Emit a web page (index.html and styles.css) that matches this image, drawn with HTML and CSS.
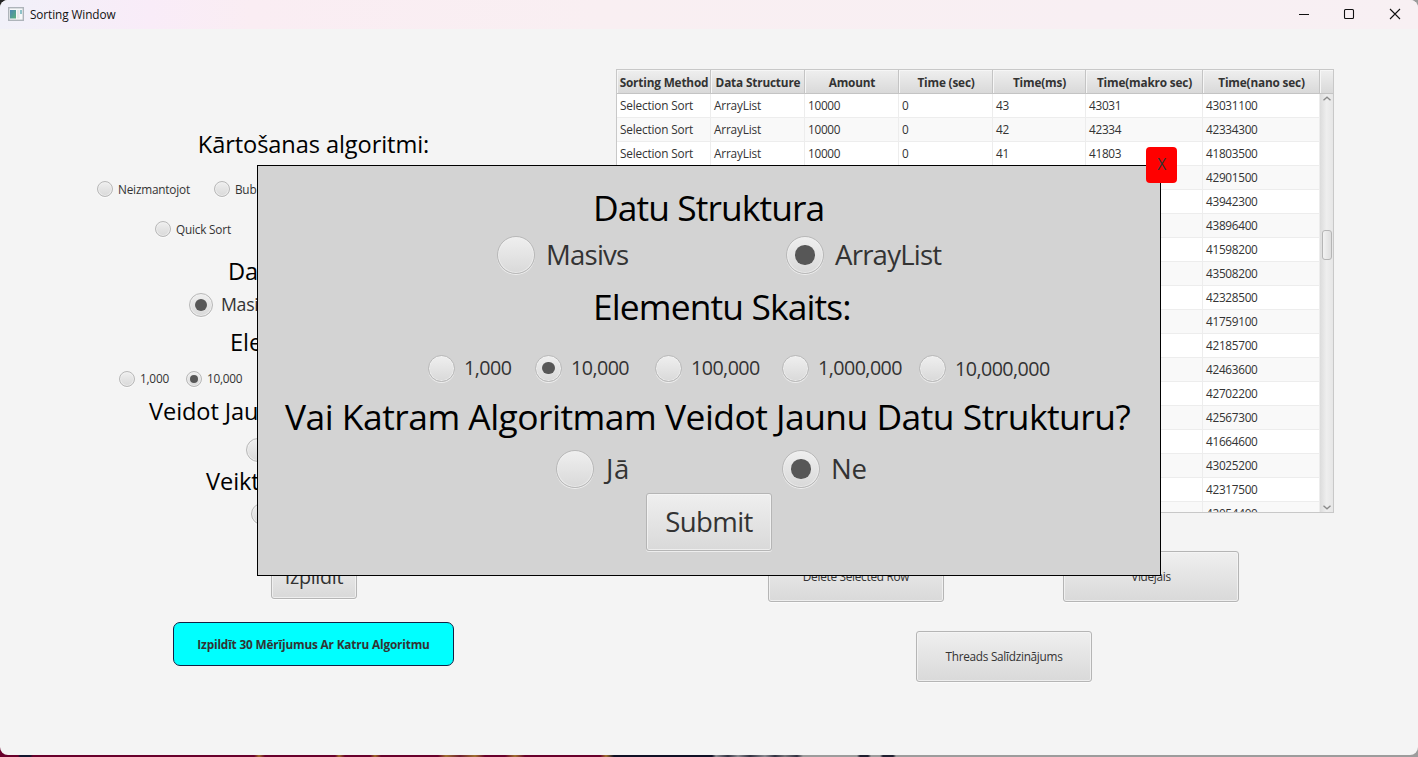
FILE: index.html
```html
<!DOCTYPE html>
<html lang="lv">
<head>
<meta charset="utf-8">
<title>Sorting Window</title>
<link rel="stylesheet" href="styles.css">
</head>
<body>
<div class="window">
  <header class="titlebar">
    <svg class="app-icon" width="16" height="14" viewBox="0 0 16 14"><defs><linearGradient id="g" x1="0" y1="0" x2="1" y2="1"><stop offset="0" stop-color="#4b86b4"/><stop offset="1" stop-color="#58b07a"/></linearGradient></defs><rect x=".7" y=".7" width="14.6" height="12.6" fill="#f6f8f9" stroke="#aeb4ba" stroke-width="1.4"/><rect x="2" y="3" width="6" height="8.5" fill="url(#g)"/><rect x="9" y="3" width="2.5" height="8.5" fill="#e4e6e8"/><rect x="12" y="3" width="2" height="4" fill="#8fc3c9"/></svg>
    <span class="title">Sorting Window</span>
    <svg class="controls" width="104" height="12" viewBox="0 0 104 12" fill="none" stroke="#111" stroke-width="1.1"><path d="M0 6.5h10"/><rect x="45.5" y="1.5" width="9" height="9" rx="1"/><path d="M91 1l10 10M101 1L91 11"/></svg>
  </header>
  <main class="content">
    <section class="options">
      <h2 class="heading r-alg">Kārtošanas algoritmi:</h2>
      <div class="row words r-one"><span class="radio"><i class="dot"></i>Neizmantojot</span><span class="radio"><i class="dot"></i>Bubble Sort</span></div>
      <div class="row words r-two"><span class="radio"><i class="dot"></i>Quick Sort</span></div>
      <h2 class="heading r-struct">Datu</h2>
      <div class="row mid r-array"><span class="radio"><i class="dot on"></i><span class="lift">Masivs</span></span></div>
      <h2 class="heading r-count">Elementu</h2>
      <div class="row r-amount"><span class="radio"><i class="dot"></i><span class="lift">1,000</span></span><span class="radio"><i class="dot on"></i><span class="lift">10,000</span></span></div>
      <h2 class="heading r-new">Veidot Jaunu</h2>
      <div class="row mid r-yes"><span class="radio"><i class="dot"></i></span></div>
      <h2 class="heading r-run">Veikt</h2>
      <div class="row mid r-last"><span class="radio"><i class="dot"></i></span></div>
      <button class="btn run">Izpildīt</button>
      <button class="run-all">Izpildīt 30 Mērījumus Ar Katru Algoritmu</button>
    </section>
    <section class="results">
      <div class="table-box">
        <table class="table">
          <colgroup><col class="w94"><col class="w94"><col class="w94"><col class="w94"><col class="w93"><col class="w117"><col class="w117"></colgroup>
          <thead><tr><th>Sorting Method</th><th>Data Structure</th><th>Amount</th><th>Time (sec)</th><th>Time(ms)</th><th>Time(makro sec)</th><th>Time(nano sec)</th></tr></thead>
          <tbody>
          <tr><td class="name">Selection Sort</td><td class="name">ArrayList</td><td>10000</td><td>0</td><td>43</td><td>43031</td><td>43031100</td></tr>
          <tr><td class="name">Selection Sort</td><td class="name">ArrayList</td><td>10000</td><td>0</td><td>42</td><td>42334</td><td>42334300</td></tr>
          <tr><td class="name">Selection Sort</td><td class="name">ArrayList</td><td>10000</td><td>0</td><td>41</td><td>41803</td><td>41803500</td></tr>
          <tr><td></td><td></td><td></td><td></td><td></td><td></td><td>42901500</td></tr>
          <tr><td></td><td></td><td></td><td></td><td></td><td></td><td>43942300</td></tr>
          <tr><td></td><td></td><td></td><td></td><td></td><td></td><td>43896400</td></tr>
          <tr><td></td><td></td><td></td><td></td><td></td><td></td><td>41598200</td></tr>
          <tr><td></td><td></td><td></td><td></td><td></td><td></td><td>43508200</td></tr>
          <tr><td></td><td></td><td></td><td></td><td></td><td></td><td>42328500</td></tr>
          <tr><td></td><td></td><td></td><td></td><td></td><td></td><td>41759100</td></tr>
          <tr><td></td><td></td><td></td><td></td><td></td><td></td><td>42185700</td></tr>
          <tr><td></td><td></td><td></td><td></td><td></td><td></td><td>42463600</td></tr>
          <tr><td></td><td></td><td></td><td></td><td></td><td></td><td>42702200</td></tr>
          <tr><td></td><td></td><td></td><td></td><td></td><td></td><td>42567300</td></tr>
          <tr><td></td><td></td><td></td><td></td><td></td><td></td><td>41664600</td></tr>
          <tr><td></td><td></td><td></td><td></td><td></td><td></td><td>43025200</td></tr>
          <tr><td></td><td></td><td></td><td></td><td></td><td></td><td>42317500</td></tr>
          <tr><td></td><td></td><td></td><td></td><td></td><td></td><td>42054400</td></tr>
          </tbody>
        </table>
        <div class="side">
          <div class="side-head"></div>
          <div class="scrollbar">
            <svg width="8" height="5" viewBox="0 0 8 5" fill="none" stroke="#8a8a8a" stroke-width="1.3"><path d="M.5 4.3L4 1.2l3.5 3.1"/></svg>
            <div class="thumb"></div>
            <svg width="8" height="5" viewBox="0 0 8 5" fill="none" stroke="#8a8a8a" stroke-width="1.3"><path d="M.5 .7L4 3.8 7.5 .7"/></svg>
          </div>
        </div>
      </div>
      <div class="actions"><button class="btn act">Delete Selected Row</button><button class="btn act">Vidējais</button></div>
      <button class="btn act threads">Threads Salīdzinājums</button>
    </section>
  </main>
</div>
<div class="dialog">
  <h1 class="big d-struct">Datu Struktura</h1>
  <div class="row large d-type"><span class="radio"><i class="dot"></i><span class="lift">Masivs</span></span><span class="radio"><i class="dot on"></i><span class="lift">ArrayList</span></span></div>
  <h1 class="big d-count">Elementu Skaits:</h1>
  <div class="row medium d-amount"><span class="radio"><i class="dot"></i><span class="lift">1,000</span></span><span class="radio"><i class="dot on"></i><span class="lift">10,000</span></span><span class="radio"><i class="dot"></i><span class="lift">100,000</span></span><span class="radio"><i class="dot"></i><span class="lift">1,000,000</span></span><span class="radio"><i class="dot"></i><span>10,000,000</span></span></div>
  <h1 class="big d-new">Vai Katram Algoritmam Veidot Jaunu Datu Strukturu?</h1>
  <div class="row large d-yes"><span class="radio"><i class="dot"></i><span class="lift yes">Jā</span></span><span class="radio"><i class="dot on"></i><span class="lift">Ne</span></span></div>
  <button class="btn submit">Submit</button>
  <button class="close">X</button>
</div>
</body>
</html>
```
FILE: styles.css
```css
* { box-sizing: border-box; }
body {
  margin: 0; width: 1418px; height: 757px; overflow: hidden; position: relative;
  font: 11.8px "Open Sans", "Noto Sans", sans-serif; letter-spacing: -0.3px; color: #333;
  background:
    linear-gradient(#252525, #252525) 0 0 / 20px 20px no-repeat,
    linear-gradient(90deg, #69002b 0 18px, #14142e 20px 30px, #69002b 33px 254px, #a06a28 259px, #69002b 265px 335px, #a06a28 339px, #69002b 345px 370px, #a06a28 375px, #69002b 381px 438px, #a07030 446px, #6d1b30 460px, #a07030 475px, #69002b 485px 505px, #a07030 515px, #69002b 525px 600px, #a07030 606px, #101025 614px 712px, #8a8a90 716px, #303040 728px, #8a8a90 738px, #303040 750px, #8a8a90 765px, #303040 775px, #77777b 785px, #303040 797px, #9c9c9c 803px 857px, #202030 860px 868px, #9c9c9c 871px 880px, #202030 883px 893px, #9c9c9c 896px) 0 100% / 100% 20px no-repeat,
    #9c9c9c;
}
h1, h2 { margin: 0; font-weight: 400; color: #000; white-space: nowrap; }
button { font: inherit; letter-spacing: inherit; color: #333; padding: 0; white-space: nowrap; }

.window { height: 755px; border-radius: 8px; overflow: hidden; background: #f4f4f4; display: flex; flex-direction: column; }
.titlebar { height: 29px; flex: none; display: flex; align-items: center; padding: 0 15px 1px 8px; background: linear-gradient(90deg, #f1f1f9, #f9ecf8 150px, #faedf3 250px, #f9eff2 600px, #f8eff3 1100px, #f8f0f3); }
.title { margin-left: 6px; color: #111; letter-spacing: -0.1px; }
.controls { margin-left: auto; }
.content { display: flex; flex: 1; }

.options { width: 616px; flex: none; padding-left: 11px; display: flex; flex-direction: column; align-items: stretch; }
.heading { height: 36px; flex: none; font-size: 23.6px; line-height: 36px; letter-spacing: -0.09px; }
.row { display: flex; align-items: center; height: 20px; flex: none; white-space: nowrap; }
.words { letter-spacing: -0.2px; }
.radio { display: flex; align-items: center; gap: 5px; }
.lift { padding-bottom: 2px; }
.dot { width: 16px; height: 16px; flex: none; border-radius: 50%; border: 1px solid #b8b8b8; background: linear-gradient(#efefef, #d9d9d9); box-shadow: inset 0 0 0 1px #f2f2f2aa, 0 1px 0 #ffffff99; display: flex; align-items: center; justify-content: center; }
.dot.on::after { content: ""; width: 50%; height: 50%; border-radius: 50%; background: #575757; min-width: 8px; min-height: 8px; }
.mid { height: 26px; font-size: 17.7px; }
.mid .dot { width: 24px; height: 24px; }
.mid .radio { gap: 8px; }
.r-alg { margin-top: 97px; text-align: center; }
.r-one { margin-top: 17px; padding-left: 86px; gap: 24px; }
.r-two { margin-top: 20px; padding-left: 144px; }
.r-struct { margin-top: 14px; padding-left: 217px; }
.r-array { margin-top: 3px; padding-left: 178px; }
.r-count { margin-top: 6px; padding-left: 219px; }
.r-amount { margin-top: 9px; padding-left: 108px; gap: 17px; letter-spacing: -0.22px; }
.r-new { margin-top: 4px; padding-left: 138px; }
.r-yes { margin-top: 8px; padding-left: 235px; }
.r-run { padding-left: 195px; }
.r-last { margin-top: 2px; padding-left: 240px; }
.r-last .dot { width: 22px; height: 22px; }

.btn { border: 1px solid #b5b5b5; border-radius: 3px; background: linear-gradient(#efefef, #d9d9d9); box-shadow: inset 0 0 0 1px #f6f6f6bb, 0 1px 0 #ffffff99; }
.run { align-self: center; width: 86px; height: 43px; margin: 29px 0 0 1px; padding-bottom: 2px; font-size: 19.7px; }
.run-all { align-self: center; width: 281px; height: 44px; margin: 23px 1px 0 0; padding-left: 1px; border: 1px solid #124; border-radius: 7px; background: #0ff; font-weight: 700; letter-spacing: -0.16px; }

.results { width: 802px; flex: none; padding-top: 40px; }
.table-box { width: 718px; height: 444px; border: 1px solid #c8c8c8; overflow: hidden; display: flex; background: #fff; }
.table { width: 703px; flex: none; table-layout: fixed; border-collapse: separate; border-spacing: 0; align-self: flex-start; }
.w94 { width: 94px; } .w93 { width: 93px; } .w117 { width: 117px; }
th { height: 24px; padding: 0 0 0 1px; font-weight: 700; line-height: 22px; letter-spacing: -0.17px; white-space: nowrap; background: linear-gradient(#efefef, #d9d9d9); border-right: 1px solid #c4c4c4; border-bottom: 1px solid #c4c4c4; box-shadow: inset 1px 1px 0 #f6f6f6; }
td { height: 24px; padding: 0 0 0 3px; line-height: 21px; white-space: nowrap; border-right: 1px solid #ededed; border-bottom: 1px solid #ededed; }
.name { letter-spacing: -0.17px; }
tbody tr:nth-child(even) { background: #f9f9f9; }
.side { flex: 1; display: flex; flex-direction: column; }
.side-head { height: 24px; background: linear-gradient(#efefef, #d9d9d9); border-bottom: 1px solid #c4c4c4; box-shadow: inset 1px 1px 0 #f6f6f6; }
.scrollbar { flex: 1; display: flex; flex-direction: column; align-items: center; padding: 2px 0 2px 1px; background: linear-gradient(90deg, #dcdcdc, #eee 50%, #e6e6e6); }
.thumb { width: 10px; height: 30px; margin: 129px 0 auto; border: 1px solid #b5b5b5; border-radius: 3px; background: linear-gradient(90deg, #f2f2f2, #dedede); }
.act { width: 176px; height: 51px; padding-bottom: 1px; letter-spacing: -0.28px; }
.actions { display: flex; gap: 119px; margin: 38px 0 0 152px; }
.threads { display: block; margin: 29px 0 0 300px; }

.dialog { position: absolute; left: 257px; top: 165px; width: 904px; height: 411px; border: 1px solid #000; background: #d3d3d3; display: flex; flex-direction: column; }
.big { height: 48px; flex: none; font-size: 35.4px; line-height: 44px; letter-spacing: -0.92px; }
.large { height: 38px; font-size: 27.6px; letter-spacing: -0.8px; }
.large .dot { width: 38px; height: 38px; }
.large .dot.on::after, .mid .dot.on::after { width: 54%; height: 54%; }
.large .radio { gap: 11px; }
.medium { height: 26px; font-size: 19.7px; letter-spacing: -0.55px; }
.medium .dot { width: 27px; height: 27px; }
.medium .radio { gap: 9px; width: 127px; }
.medium .radio:nth-child(1) { width: 107px; }
.medium .radio:nth-child(2) { width: 120px; }
.medium .radio:nth-child(4) { width: 137px; }
.d-struct { margin-top: 19px; padding-left: 335px; }
.d-type { margin-top: 3px; padding-left: 239px; }
.d-type .radio:first-child { width: 289px; }
.d-count { margin-top: 10px; padding-left: 335px; letter-spacing: -0.88px; }
.d-amount { margin-top: 23px; padding-left: 170px; }
.d-new { margin-top: 13px; padding-left: 27px; letter-spacing: -0.51px; }
.d-yes { margin-top: 8px; padding-left: 298px; letter-spacing: -0.2px; }
.d-yes .radio:first-child { width: 226px; }
.yes { padding-left: 1px; letter-spacing: 0.5px; }
.submit { width: 126px; height: 58px; margin: 5px 0 0 388px; padding-bottom: 2px; font-size: 27.6px; letter-spacing: -0.6px; }
.close { position: absolute; left: 888px; top: -19px; width: 31px; height: 36px; padding-bottom: 2px; border: 0; border-radius: 4px; background: #f00; font-size: 15.5px; }
```
